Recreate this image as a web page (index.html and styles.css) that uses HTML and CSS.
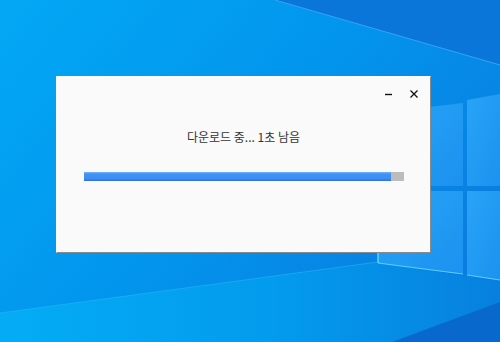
FILE: index.html
```html
<!DOCTYPE html>
<html>
<head>
    <meta charset="UTF-8">
    <meta name="viewport" content="width=device-width, initial-scale=1.0">
    <title>다운로드</title>
    <link rel="stylesheet" href="styles.css">
</head>
<body>
    <div class="desktop">
      <svg class="wallpaper" width="500" height="342" viewBox="0 0 500 342">
        <defs>
          <linearGradient id="bg" x1="0" y1="0" x2="1" y2="0.6">
            <stop offset="0" stop-color="#03a8f4"/>
            <stop offset="0.55" stop-color="#0295ee"/>
            <stop offset="1" stop-color="#0a7ee0"/>
          </linearGradient>
          <linearGradient id="pane" x1="0" y1="0" x2="1" y2="1">
            <stop offset="0" stop-color="#28a4f6"/>
            <stop offset="1" stop-color="#1b92f0"/>
          </linearGradient>
          <linearGradient id="floor" x1="0" y1="0" x2="1" y2="0">
            <stop offset="0" stop-color="#04acf5"/>
            <stop offset="0.55" stop-color="#039bed"/>
            <stop offset="1" stop-color="#0780de"/>
          </linearGradient>
        </defs>
        <rect width="500" height="342" fill="url(#bg)"/>
        <!-- dark sky above the top beam -->
        <polygon points="275,0 500,0 500,65" fill="#0a76d9"/>
        <line x1="275" y1="0" x2="500" y2="65" stroke="#35a4f2" stroke-width="1"/>
        <!-- floor below the lower beam -->
        <polygon points="0,313 378,262 500,282 500,342 0,342" fill="url(#floor)"/>
        <polygon points="500,302 500,342 392,342" fill="#0868cb"/>
        <line x1="0" y1="313" x2="378" y2="262" stroke="#30c0fa" stroke-width="1" opacity="0.45"/>
        <!-- window logo -->
        <polygon points="378,113 463,103 463,186 378,186" fill="url(#pane)"/>
        <polygon points="378,191 463,191 463,274 378,263" fill="url(#pane)"/>
        <polygon points="467,100 500,94 500,186 467,186" fill="url(#pane)"/>
        <polygon points="467,191 500,191 500,280 467,275" fill="url(#pane)"/>
        <line x1="378" y1="190" x2="378" y2="263" stroke="#66e4ff" stroke-width="1.2"/>
        <line x1="378" y1="263" x2="463" y2="274" stroke="#5fd0ff" stroke-width="1"/>
        <line x1="467" y1="275" x2="500" y2="280" stroke="#5fd0ff" stroke-width="1"/>
      </svg>

      <div class="dialog">
        <div class="titlebar">
          <button class="title-btn" aria-label="최소화">
            <svg width="10" height="10" viewBox="0 0 10 10"><path d="M1 5.5h7" stroke="#111" stroke-width="1.4"/></svg>
          </button>
          <button class="title-btn" aria-label="닫기">
            <svg width="10" height="10" viewBox="0 0 10 10"><path d="M1.5 1.5l7 7M8.5 1.5l-7 7" stroke="#111" stroke-width="1.3"/></svg>
          </button>
        </div>
        <p class="status">다운로드 중... 1초 남음</p>
        <div class="progress">
          <div class="progress-fill" style="width: 96%"></div>
        </div>
      </div>
    </div>
</body>
</html>
```

FILE: styles.css
```css
body {
  margin: 0;
  font-family: "Noto Sans CJK KR", "Noto Sans", sans-serif;
}

.desktop {
  position: relative;
  width: 500px;
  height: 342px;
  overflow: hidden;
  padding: 76px 0 0 56px;
  box-sizing: border-box;
}

.wallpaper {
  position: absolute;
  left: 0;
  top: 0;
  display: block;
}

.dialog {
  position: relative;
  width: 375px;
  height: 177px;
  box-sizing: border-box;
  background: #fafafa;
  border: 1px solid rgba(255, 255, 255, 0.45);
  border-right-color: #8a8a8a;
  border-bottom-color: #8a8a8a;
}

.titlebar {
  display: flex;
  justify-content: flex-end;
  align-items: center;
  height: 34px;
  padding-right: 4px;
}

.title-btn {
  width: 24px;
  height: 24px;
  padding: 0;
  margin-left: 1px;
  border: none;
  background: none;
  display: flex;
  align-items: center;
  justify-content: center;
}

.status {
  margin: 18px 0 0;
  text-align: center;
  font-size: 12px;
  line-height: 16px;
  color: #333;
}

.progress {
  margin: 27px 26px 0 27px;
  height: 9px;
  background: #bcbcbc;
}

.progress-fill {
  height: 100%;
  background: linear-gradient(#7ab8fb 0, #4393f6 20%, #3c8cf4 75%, #2f6fd0 100%);
}
```
